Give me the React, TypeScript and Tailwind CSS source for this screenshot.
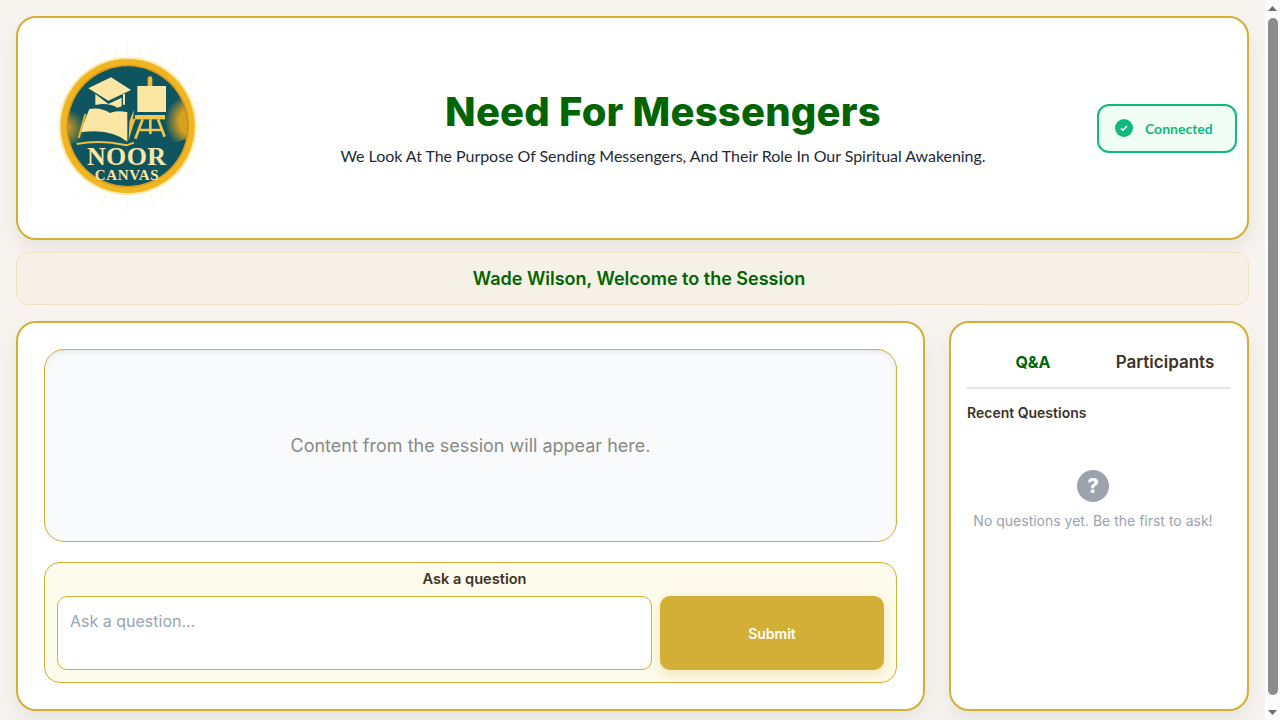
import React from 'react';

const Logo = () => {
  const rays = Array.from({ length: 40 }, (_, i) => (i * 360) / 40);
  return (
    <svg width="190" height="180" viewBox="0 0 570 540" className="mb-4 shrink-0">
      <defs>
        <radialGradient id="patchRight" gradientUnits="userSpaceOnUse" cx="490" cy="275" r="85">
          <stop offset="0.5" stopColor="#d9a01f" />
          <stop offset="1" stopColor="#d9a01f" stopOpacity="0" />
        </radialGradient>
        <radialGradient id="patchLeft" gradientUnits="userSpaceOnUse" cx="105" cy="295" r="60">
          <stop offset="0.2" stopColor="#c2962a" />
          <stop offset="1" stopColor="#c2962a" stopOpacity="0" />
        </radialGradient>
        <clipPath id="disc"><circle cx="293" cy="288" r="179" /></clipPath>
      </defs>
      {rays.map((a) => (
        <line key={a} x1="293" y1={a % 18 === 0 ? 36 : 52} x2="293" y2="78" stroke="#fdf6d8" strokeWidth="2.5" transform={`rotate(${a} 293 288)`} />
      ))}
      <circle cx="293" cy="288" r="207" fill="#fbe9a8" />
      <circle cx="293" cy="288" r="201" fill="#f0b521" />
      <circle cx="293" cy="288" r="184" fill="#d8981a" />
      <circle cx="293" cy="288" r="179" fill="#0f5560" />
      <g clipPath="url(#disc)">
        <rect x="380" y="170" width="110" height="190" fill="url(#patchRight)" />
        <rect x="105" y="220" width="70" height="130" fill="url(#patchLeft)" />
        <path d="M110 345q90-25 185 0 90 20 185-24v170H110z" fill="#0f5560" />
      </g>
      {/* cap */}
      <path d="M175 175l68-33 60 38-68 32z" fill="#fbe7a3" />
      <path d="M196 192v33q40-8 66 8l13-4v-26l-40 19z" fill="#fbe7a3" />
      <path d="M282 192v32" stroke="#fbe7a3" strokeWidth="6" />
      {/* book */}
      <path d="M178 237q35-6 62 12 20-10 52-2v88q-50-42-142-28z" fill="#fbe7a3" />
      <path d="M298 275q4-14 14-35l-3 28 9-4-14 40-8 28z" fill="#f0bd3e" />
      <path d="M166 252l-20 72" fill="none" stroke="#e8b531" strokeWidth="6" />
      <path d="M140 342q70-14 150 4l22-8" fill="none" stroke="#f0bd3e" strokeWidth="6" />
      {/* easel */}
      <path d="M360 146v24" stroke="#f0bd3e" strokeWidth="14" strokeLinecap="round" />
      <path d="M322 168h86v78h-86z" fill="#fbe7a3" />
      <path d="M315 255h90v13h-90z" fill="#f3c64f" />
      <path d="M338 268l-22 58M384 268l20 52M361 268v44M328 300h70" stroke="#f3c64f" strokeWidth="8" fill="none" />
      <text x="290" y="405" textAnchor="middle" fontFamily="'Liberation Serif', serif" fontWeight="700" fontSize="78" letterSpacing="1" fill="#fbe7a3">NOOR</text>
      <text x="291" y="450" textAnchor="middle" fontFamily="'Liberation Serif', serif" fontWeight="700" fontSize="45" letterSpacing="2" fill="#fbe7a3">CANVAS</text>
    </svg>
  );
};

const Scrollbar = () => (
  <div className="flex h-screen w-[15px] shrink-0 flex-col items-center bg-[#fbfbfb]">
    <svg width="15" height="18" viewBox="0 0 15 18" className="shrink-0"><path d="M7.5 6l4.5 5H3z" fill="#6e6e6e" /></svg>
    <div className="h-[677px] w-[10px] rounded-full bg-[#8c8c8c]" />
    <div className="flex-1" />
    <svg width="15" height="17" viewBox="0 0 15 17" className="shrink-0"><path d="M7.5 12L3 7h9z" fill="#6e6e6e" /></svg>
  </div>
);

const App: React.FC = () => {
  return (
    <div className="flex h-screen overflow-hidden bg-[#f8f5f0] font-['Inter',sans-serif]">
      <div className="min-w-0 flex-1 p-4">
        {/* header */}
        <header className="flex h-[224px] items-center rounded-[20px] border-2 border-[#d4af37] bg-white pl-[12px] pr-[10px] shadow-[0_10px_25px_rgba(0,0,0,0.08)]">
          <Logo />
          <div className="flex-1 pl-[9px] text-center">
            <h1 className="text-[40px] font-extrabold leading-[48px] tracking-[0.2px] text-[#006400]">Need For Messengers</h1>
            <p className="mt-2 font-['Lato',sans-serif] text-[16px] leading-[24px] tracking-[-0.04px] text-[#1f2937]">We Look At The Purpose Of Sending Messengers, And Their Role In Our Spiritual Awakening.</p>
          </div>
          <div className="flex h-[49px] w-[140px] items-center gap-[12px] rounded-[12px] border-2 border-[#10b981] bg-[#f0fdf4] pl-[16px]">
            <span className="flex h-[18px] w-[18px] items-center justify-center rounded-full bg-[#10b981]">
              <svg width="10" height="10" viewBox="0 0 10 10"><path d="M2 5.2l2 2 4-4.2" fill="none" stroke="#fff" strokeWidth="1.6" /></svg>
            </span>
            <span className="pt-[1px] font-['Lato',sans-serif] text-[14px] font-bold text-[#10b981]">Connected</span>
          </div>
        </header>

        {/* welcome */}
        <div className="mt-3 flex h-[53px] items-center justify-center rounded-[12px] border border-[#f0e3c0] bg-[#f6f1e7] pl-[13px]">
          <h2 className="text-[18px] font-semibold text-[#006400]">Wade Wilson, Welcome to the Session</h2>
        </div>

        <div className="mt-4 flex gap-6">
          {/* main */}
          <main className="h-[390px] w-[909px] rounded-[20px] border-2 border-[#d4af37] bg-white px-[26px] pt-[26px] shadow-[0_10px_25px_rgba(0,0,0,0.08)]">
            <div className="flex h-[193px] items-center justify-center rounded-[20px] border border-[#d4af37] bg-[#f9fafb] shadow-[inset_0_2px_4px_rgba(0,0,0,0.08)]">
              <p className="text-[18px] text-[#8a8a85]">Content from the session will appear here.</p>
            </div>
            <div className="mt-5 h-[121px] rounded-[16px] border border-[#d4af37] bg-[#fdfbeb] px-3 pt-[6px]">
              <p className="ml-[8px] text-center text-[14.6px] font-semibold leading-[20px] text-[#3d3327]">Ask a question</p>
              <div className="mt-[7px] flex gap-2">
                <div className="h-[74px] w-[595px] rounded-[10px] border border-[#d4af37] bg-white px-3 py-3 text-[16px] leading-[24px] text-[#9ca3af]">Ask a question...</div>
                <button className="h-[74px] w-[224px] rounded-[10px] bg-[#d4af37] text-[14px] font-semibold text-white shadow-[0_4px_12px_rgba(212,175,55,0.3)]">Submit</button>
              </div>
            </div>
          </main>

          {/* side panel */}
          <aside className="h-[390px] w-[300px] rounded-[20px] border-2 border-[#d4af37] bg-white px-4 shadow-[0_10px_25px_rgba(0,0,0,0.08)]">
            <div className="flex h-[66px] items-end border-b-2 border-[#e5e7eb] pb-[13px]">
              <span className="w-[132px] text-center text-[16px] font-bold text-[#006400]">Q&amp;A</span>
              <span className="w-[132px] translate-y-[1px] text-center text-[17px] font-semibold text-[#3d3327]">Participants</span>
            </div>
            <p className="mt-[14px] text-[14px] font-semibold leading-[20px] text-[#3d3327]">Recent Questions</p>
            <div className="mt-[47px] flex flex-col items-center pr-[12px]">
              <span className="flex h-8 w-8 items-center justify-center rounded-full bg-[#9ca3af] text-[20px] font-extrabold leading-none text-white">?</span>
              <p className="mt-[9px] text-[14px] leading-[20px] text-[#9ca3af]">No questions yet. Be the first to ask!</p>
            </div>
          </aside>
        </div>
      </div>
      <Scrollbar />
    </div>
  );
};

export default App;
